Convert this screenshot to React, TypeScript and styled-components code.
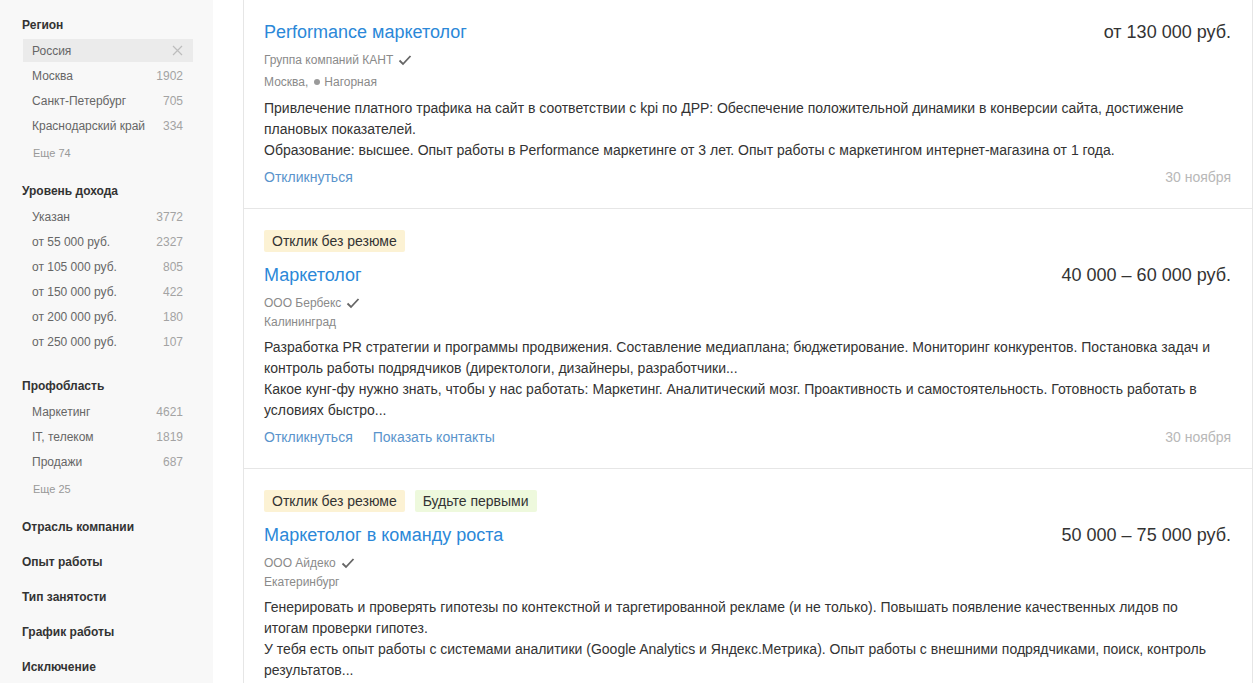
import React from 'react';
import styled, { createGlobalStyle } from 'styled-components';

const GlobalStyle = createGlobalStyle`
  html, body {
    margin: 0;
    padding: 0;
    background: #fff;
    font-family: "Liberation Sans", Arial, sans-serif;
  }
`;

const Page = styled.div`
  display: flex;
  align-items: flex-start;
  gap: 30px;
  width: 1259px;
  height: 683px;
  overflow: hidden;
`;

const Sidebar = styled.aside`
  display: flex;
  flex-direction: column;
  width: 213px;
  min-height: 683px;
  flex-shrink: 0;
  background: #f8f8f8;
  padding: 15px 20px 0 22px;
  box-sizing: border-box;
`;

const Section = styled.div`
  display: flex;
  flex-direction: column;
  margin-bottom: 15px;
`;

const SectionTitle = styled.div`
  font-size: 12px;
  font-weight: bold;
  color: #333;
  line-height: 20px;
`;

const FilterList = styled.div`
  display: flex;
  flex-direction: column;
  gap: 2px;
  margin: 4px 0 8px 1px;
  width: 170px;
`;

const FilterRow = styled.div<{ $active?: boolean }>`
  display: flex;
  align-items: center;
  justify-content: space-between;
  height: 23px;
  padding: 0 10px 0 9px;
  font-size: 12px;
  color: #666;
  background: ${(p) => (p.$active ? '#ebebeb' : 'transparent')};
`;

const Count = styled.span`
  color: #a3a3a3;
`;

const More = styled.div`
  font-size: 11px;
  color: #999;
  line-height: 16px;
  padding-left: 11px;
  margin-bottom: 5px;
`;

const Main = styled.main`
  width: 1010px;
  flex-shrink: 0;
  border-left: 1px solid #e6e6e6;
  border-right: 1px solid #e6e6e6;
  box-sizing: border-box;
`;

const Card = styled.article`
  padding: 20px 20px 21px;
  border-bottom: 1px solid #e6e6e6;
`;

const Badges = styled.div`
  display: flex;
  gap: 10px;
  margin: 1px 0 11px;
`;

const Badge = styled.span<{ $tone: 'yellow' | 'green' }>`
  display: inline-block;
  height: 22px;
  line-height: 22px;
  padding: 0 8px;
  font-size: 14px;
  color: #333;
  border-radius: 2px;
  background: ${(p) => (p.$tone === 'yellow' ? '#fcf2d4' : '#eef9dd')};
`;

const Head = styled.div`
  display: flex;
  justify-content: space-between;
  align-items: center;
  line-height: 24px;
`;

const Title = styled.a`
  font-size: 18px;
  color: #2b88d8;
  text-decoration: none;
`;

const Salary = styled.span`
  font-size: 18px;
  color: #333;
  margin-right: 1px;
`;

const Meta = styled.div`
  margin-top: 6px;
  font-size: 12px;
  color: #8a8a8a;
  line-height: 20px;
`;

const MetaLine = styled.div<{ $tall?: boolean }>`
  display: flex;
  align-items: ${(p) => (p.$tall ? 'flex-end' : 'center')};
  gap: 4px;
  height: ${(p) => (p.$tall ? '23px' : '19px')};
`;

const MetroDot = styled.span`
  display: inline-block;
  align-self: center;
  width: 6px;
  height: 6px;
  border-radius: 50%;
  background: #9a9a9a;
  margin: 3px 0 0 2px;
`;

const Description = styled.div`
  margin-top: 6px;
  max-width: 955px;
  font-size: 14px;
  line-height: 21px;
  color: #333;
`;

const Footer = styled.div`
  display: flex;
  justify-content: space-between;
  align-items: center;
  margin-top: 6px;
  line-height: 20px;
  font-size: 14px;
`;

const Actions = styled.div`
  display: flex;
  gap: 20px;
`;

const Action = styled.a`
  color: #5a94cc;
  text-decoration: none;
`;

const DateText = styled.span`
  color: #b8b8b8;
  margin-right: 1px;
`;

const Check = () => (
  <svg width="14" height="12" viewBox="0 0 14 12" style={{ marginLeft: 1 }}>
    <path d="M1.5 6.5 L5 10 L12.5 2" fill="none" stroke="#666" strokeWidth="1.8" />
  </svg>
);

const Cross = () => (
  <svg width="11" height="11" viewBox="0 0 11 11">
    <path d="M1 1 L10 10 M10 1 L1 10" stroke="#bdbdbd" strokeWidth="1.2" />
  </svg>
);

type Filter = { label: string; count?: string; active?: boolean };

const filterSections: { title: string; items?: Filter[]; more?: string }[] = [
  {
    title: 'Регион',
    items: [
      { label: 'Россия', active: true },
      { label: 'Москва', count: '1902' },
      { label: 'Санкт-Петербург', count: '705' },
      { label: 'Краснодарский край', count: '334' },
    ],
    more: 'Еще 74',
  },
  {
    title: 'Уровень дохода',
    items: [
      { label: 'Указан', count: '3772' },
      { label: 'от 55 000 руб.', count: '2327' },
      { label: 'от 105 000 руб.', count: '805' },
      { label: 'от 150 000 руб.', count: '422' },
      { label: 'от 200 000 руб.', count: '180' },
      { label: 'от 250 000 руб.', count: '107' },
    ],
  },
  {
    title: 'Профобласть',
    items: [
      { label: 'Маркетинг', count: '4621' },
      { label: 'IT, телеком', count: '1819' },
      { label: 'Продажи', count: '687' },
    ],
    more: 'Еще 25',
  },
  { title: 'Отрасль компании' },
  { title: 'Опыт работы' },
  { title: 'Тип занятости' },
  { title: 'График работы' },
  { title: 'Исключение' },
];

type Vacancy = {
  badges: { text: string; tone: 'yellow' | 'green' }[];
  title: string;
  salary: string;
  company: string;
  city: string;
  metro?: string;
  text: string[];
  actions: string[];
  date?: string;
};

const vacancies: Vacancy[] = [
  {
    badges: [],
    title: 'Performance маркетолог',
    salary: 'от 130 000 руб.',
    company: 'Группа компаний КАНТ',
    city: 'Москва,',
    metro: 'Нагорная',
    text: [
      'Привлечение платного трафика на сайт в соответствии с kpi по ДРР: Обеспечение положительной динамики в конверсии сайта, достижение плановых показателей.',
      'Образование: высшее. Опыт работы в Performance маркетинге от 3 лет. Опыт работы с маркетингом интернет-магазина от 1 года.',
    ],
    actions: ['Откликнуться'],
    date: '30 ноября',
  },
  {
    badges: [{ text: 'Отклик без резюме', tone: 'yellow' }],
    title: 'Маркетолог',
    salary: '40 000 – 60 000 руб.',
    company: 'ООО Бербекс',
    city: 'Калининград',
    text: [
      'Разработка PR стратегии и программы продвижения. Составление медиаплана; бюджетирование. Мониторинг конкурентов. Постановка задач и контроль работы подрядчиков (директологи, дизайнеры, разработчики...',
      'Какое кунг-фу нужно знать, чтобы у нас работать: Маркетинг. Аналитический мозг. Проактивность и самостоятельность. Готовность работать в условиях быстро...',
    ],
    actions: ['Откликнуться', 'Показать контакты'],
    date: '30 ноября',
  },
  {
    badges: [
      { text: 'Отклик без резюме', tone: 'yellow' },
      { text: 'Будьте первыми', tone: 'green' },
    ],
    title: 'Маркетолог в команду роста',
    salary: '50 000 – 75 000 руб.',
    company: 'ООО Айдеко',
    city: 'Екатеринбург',
    text: [
      'Генерировать и проверять гипотезы по контекстной и таргетированной рекламе (и не только). Повышать появление качественных лидов по итогам проверки гипотез.',
      'У тебя есть опыт работы с системами аналитики (Google Analytics и Яндекс.Метрика). Опыт работы с внешними подрядчиками, поиск, контроль результатов...',
    ],
    actions: ['Откликнуться'],
    date: '30 ноября',
  },
];

function App(): JSX.Element {
  return (
    <>
      <GlobalStyle />
      <Page>
        <Sidebar>
          {filterSections.map((s) => (
            <Section key={s.title}>
              <SectionTitle>{s.title}</SectionTitle>
              {s.items && (
                <FilterList>
                  {s.items.map((f) => (
                    <FilterRow key={f.label} $active={f.active}>
                      <span>{f.label}</span>
                      {f.active ? <Cross /> : <Count>{f.count}</Count>}
                    </FilterRow>
                  ))}
                </FilterList>
              )}
              {s.more && <More>{s.more}</More>}
            </Section>
          ))}
        </Sidebar>
        <Main>
          {vacancies.map((v) => (
            <Card key={v.title}>
              {v.badges.length > 0 && (
                <Badges>
                  {v.badges.map((b) => (
                    <Badge key={b.text} $tone={b.tone}>
                      {b.text}
                    </Badge>
                  ))}
                </Badges>
              )}
              <Head>
                <Title href="#">{v.title}</Title>
                <Salary>{v.salary}</Salary>
              </Head>
              <Meta>
                <MetaLine>
                  {v.company}
                  <Check />
                </MetaLine>
                <MetaLine $tall={!!v.metro}>
                  {v.city}
                  {v.metro && (
                    <>
                      <MetroDot />
                      {v.metro}
                    </>
                  )}
                </MetaLine>
              </Meta>
              <Description>
                {v.text.map((t) => (
                  <div key={t}>{t}</div>
                ))}
              </Description>
              <Footer>
                <Actions>
                  {v.actions.map((a) => (
                    <Action href="#" key={a}>
                      {a}
                    </Action>
                  ))}
                </Actions>
                <DateText>{v.date}</DateText>
              </Footer>
            </Card>
          ))}
        </Main>
      </Page>
    </>
  );
}

export default App;
